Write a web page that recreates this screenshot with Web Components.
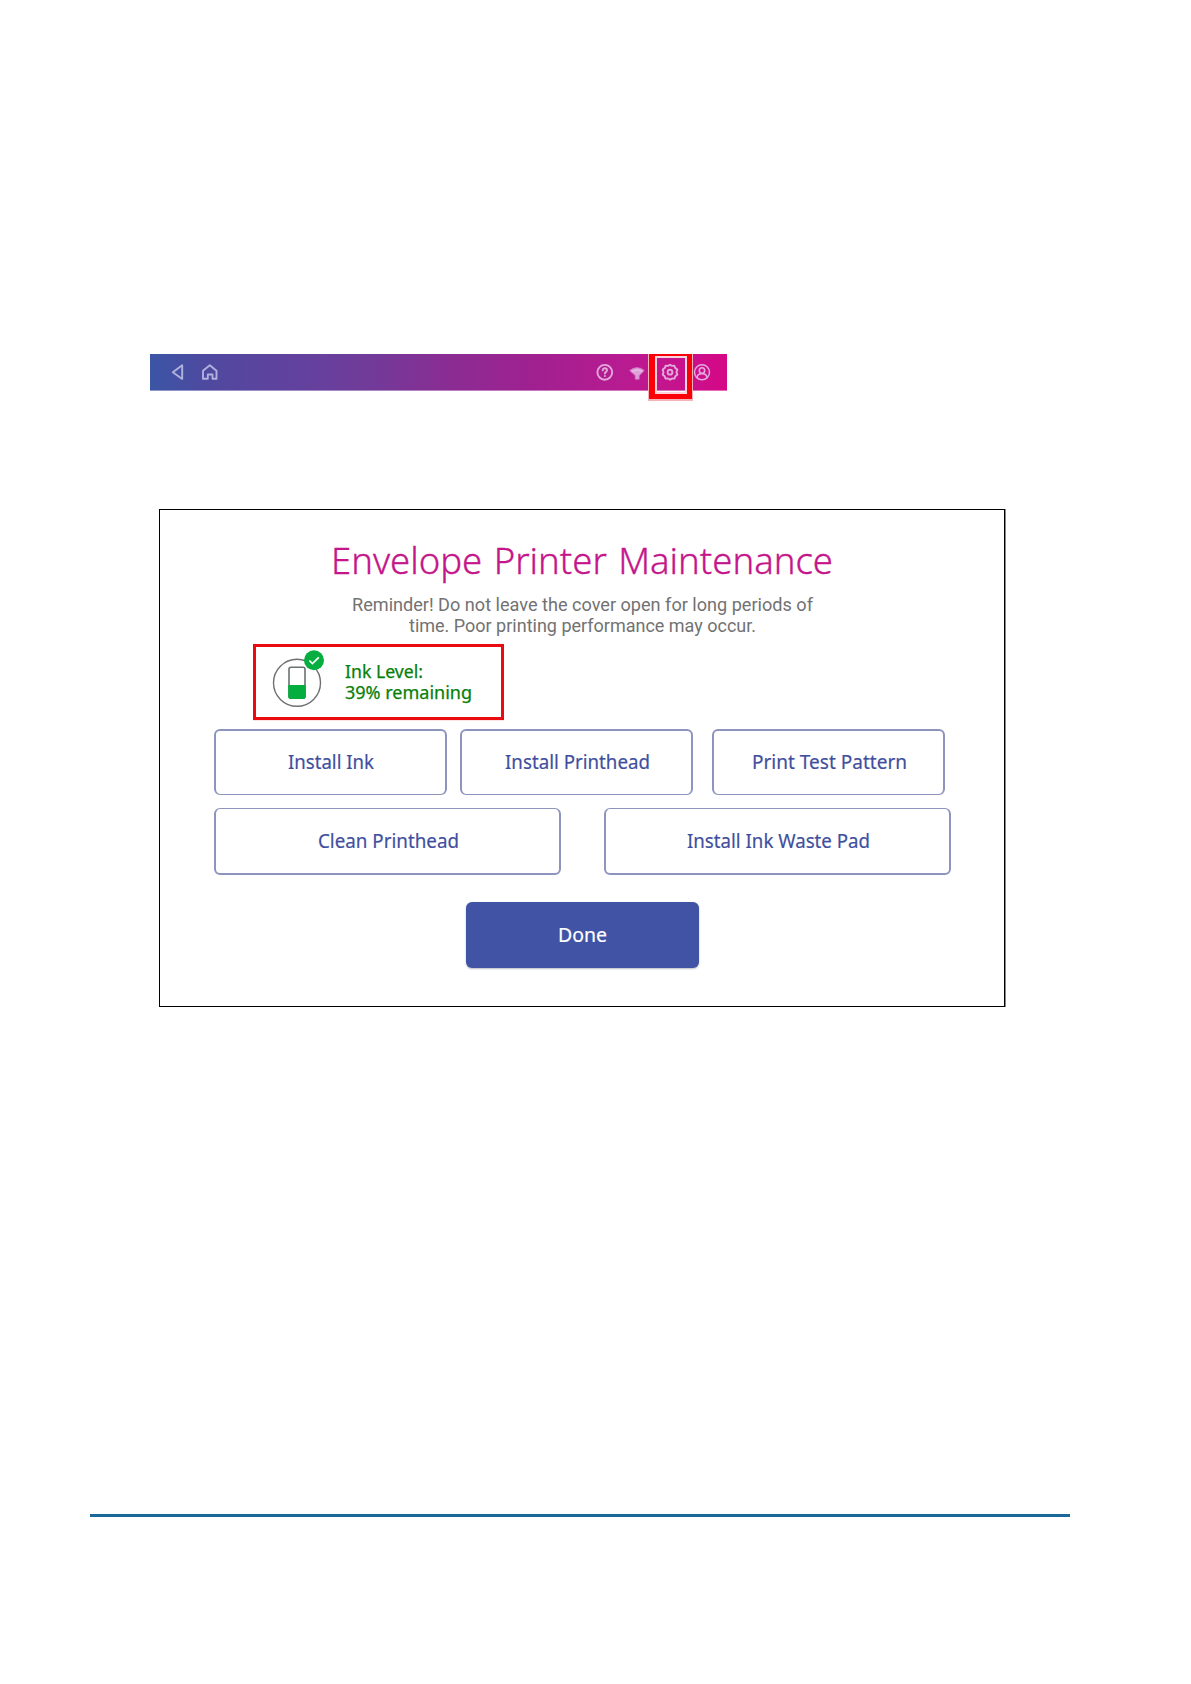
<!DOCTYPE html>
<html lang="en">
<head>
<meta charset="utf-8">
<title>Envelope Printer Maintenance</title>
<style>
  body { margin: 0; background: #fff; font-family: "Noto Sans", "Open Sans", sans-serif; }
</style>
</head>
<body>
<manual-page>
  <nav-bar slot="bar"></nav-bar>
  <maintenance-panel></maintenance-panel>
</manual-page>

<script>
// one line of text, condensed to the given width
class FitText extends HTMLElement {
  constructor() {
    super();
    this.attachShadow({ mode: 'open' });
    this.shadowRoot.innerHTML = `
      <style>
        :host { display:block; white-space:nowrap; flex:none; }
        span { display:inline-block; vertical-align:top; transform-origin:0 50%; }
      </style>
      <span><slot></slot></span>
    `;
  }
  connectedCallback() {
    const w = parseFloat(this.getAttribute('width'));
    const span = this.shadowRoot.querySelector('span');
    this.style.width = w + 'px';
    const natural = span.getBoundingClientRect().width;
    if (natural) span.style.transform = `scaleX(${w / natural})`;
  }
}

class ManualPage extends HTMLElement {
  constructor() {
    super();
    this.attachShadow({ mode: 'open' });
    this.shadowRoot.innerHTML = `
      <style>
        :host { display:flex; flex-direction:column; box-sizing:border-box; width:1191px; height:1684px; padding:354px 121px 167px 90px; overflow:hidden; }
        .bar { margin-left:60px; }
        .body { margin:118px 0 0 69px; }
        .rule { height:3px; margin-top:auto; background:#1b689b; }
      </style>
      <div class="bar"><slot name="bar"></slot></div>
      <div class="body"><slot></slot></div>
      <div class="rule"></div>
    `;
  }
}

class NavBar extends HTMLElement {
  constructor() {
    super();
    this.attachShadow({ mode: 'open' });
    this.shadowRoot.innerHTML = `
      <style>
        :host { display:flex; position:relative; box-sizing:border-box; width:577px; height:37px; padding:0 15px 0 18px; align-items:center; border-bottom:1px solid rgba(255,255,255,.4);
          background:linear-gradient(90deg,#3b55a5 0,#51489f 11%,#64419e 27%,#713b99 38%,#892d93 51%,#a12090 67%,#b81b91 82%,#ca108b 94%,#d60786 100%); background-clip:border-box; background-origin:border-box; }
        svg { display:block; flex:none; width:20px; height:20px; fill:none; stroke:#e3a9dc; stroke-width:1.9; stroke-linejoin:round; stroke-linecap:round; }
        .left, .right { display:flex; }
        .left { gap:12px; }
        .left svg { stroke:#b0b1de; }
        .right { margin-left:auto; gap:12.5px; }
        .mark { position:absolute; left:498px; top:0; box-sizing:border-box; width:45px; height:47px; border:solid #f8b4bb; border-width:0 1px 2px; }
        .mark i { display:block; box-sizing:border-box; height:45px; border:solid #fb0008; border-width:2px 5px 5px 6px; }
        .mark b { display:block; box-sizing:border-box; width:32px; height:38px; border:2px solid #fad4dc; }
      </style>
      <div class="left">
        <svg viewBox="0 0 20 20"><path d="M14.2 3.3v13.6L4.8 10.2z"/></svg>
        <svg viewBox="0 0 20 20"><path d="M3 16.8V8.7L9.8 3.2l6.7 5.5v8.1h-4v-4.3H7.8v4.3z"/></svg>
      </div>
      <div class="right">
        <svg viewBox="0 0 20 20"><circle cx="9.8" cy="10.3" r="7.4"/><path d="M7.7 8.4c0-2.9 4.3-2.7 4.3-.1 0 1.7-2.1 1.7-2.1 3.2M9.9 14v.1"/></svg>
        <svg viewBox="0 0 20 20" stroke="none"><path d="M2.8 8.3Q10 2.8 17.2 8.3L12.2 13.7v3.5H8.2v-3.5z" fill="#dfa0d8" stroke="#cf6fc4" stroke-width=".8"/><path d="M5 9.8Q10.1 6 15.2 9.8" stroke="#ecc6e8" stroke-width="1"/></svg>
        <svg viewBox="0 0 20 20"><path d="M10 2.7l2 1.2 2.4-.1.9 2.3 2 1.5-.8 2.6.8 2.6-2 1.5-.9 2.3-2.4-.1-2 1.3-2-1.3-2.4.1-.9-2.3-2-1.5.8-2.6-.8-2.6 2-1.5.9-2.3 2.4.1z"/><circle cx="10" cy="10.2" r="2.4"/></svg>
        <svg viewBox="0 0 20 20"><circle cx="10" cy="10.3" r="7.5" stroke-width="1.5"/><circle cx="10" cy="8.5" r="2.7" stroke-width="1.6"/><path d="M5.2 15.3c.2-4.8 9.4-4.8 9.6 0" stroke-width="1.6"/></svg>
      </div>
      <div class="mark"><i><b></b></i></div>
    `;
  }
}

class InkLevel extends HTMLElement {
  constructor() {
    super();
    this.attachShadow({ mode: 'open' });
    this.shadowRoot.innerHTML = `
      <style>
        :host { display:flex; box-sizing:border-box; width:251px; height:76px; padding-left:12px; align-items:center; border:3px solid #e90b10; box-shadow:0 1px #ffe3e3; color:#078007; font-size:18px; line-height:21.5px; -webkit-text-stroke:.25px; }
        svg { display:block; flex:none; width:60px; height:60px; margin-right:17px; overflow:visible; }
      </style>
      <svg viewBox="268 652 60 60" fill="none">
        <circle cx="297" cy="682.8" r="23.5" stroke="#707070" stroke-width="1.4"/>
        <rect x="289" y="667.2" width="16" height="31" rx="2" stroke="#6a7270" stroke-width="1.6"/>
        <path d="M288.2 685h17.6v11.6q0 2.4-2.4 2.4h-12.8q-2.4 0-2.4-2.4z" fill="#05ae3e"/>
        <circle cx="314" cy="660.2" r="10" fill="#05ae3e"/>
        <path d="M309.4 660.5l3 3 6.4-6.2" stroke="#fff" stroke-width="1.7"/>
      </svg>
      <div>
        <fit-text width="78">Ink Level:</fit-text>
        <fit-text width="127">39% remaining</fit-text>
      </div>
    `;
  }
}

class PanelButton extends HTMLElement {
  constructor() {
    super();
    this.attachShadow({ mode: 'open' });
    this.shadowRoot.innerHTML = `
      <style>
        :host { display:flex; box-sizing:border-box; width:233px; height:66px; padding:0 0 2px 1px; flex:none; align-items:center; justify-content:center; border:solid #8d95bf; border-width:2px 2px 1px; border-radius:6px; color:#3f4f9e; font-size:20px; line-height:28px; -webkit-text-stroke:.2px; }
        :host([wide]) { width:347px; height:67px; padding-bottom:0; border-width:1px 2px 2px; }
        :host([primary]) { padding-bottom:0; border:0; background:#4053a5; color:#fff; box-shadow:0 1px 2px rgba(50,60,90,.35); }
      </style>
      <slot></slot>
    `;
  }
}

class MaintenancePanel extends HTMLElement {
  constructor() {
    super();
    this.attachShadow({ mode: 'open' });
    this.shadowRoot.innerHTML = `
      <style>
        :host { display:flex; flex-direction:column; box-sizing:border-box; width:846px; height:498px; padding:25px 0 0; border:1px solid #000; box-shadow:1px 0 #888; }
        .title { align-self:center; height:50px; color:#c4168a; font-size:37.5px; font-weight:300; line-height:50px; word-spacing:2px; -webkit-text-stroke:.35px; }
        .note { display:flex; flex-direction:column; align-items:center; height:41px; margin-top:10px; color:#727272; font:18px/20.5px Roboto, sans-serif; }
        ink-level { margin:8px 0 0 93px; }
        .row { display:flex; margin-left:54px; }
        .three { margin-top:9px; }
        .three panel-button + panel-button { margin-left:13px; }
        .three panel-button:last-child { margin-left:19px; }
        .two { margin-top:13px; gap:43px; }
        .done { align-self:center; margin-top:27px; }
      </style>
      <fit-text class="title" width="502">Envelope Printer Maintenance</fit-text>
      <div class="note">
        <fit-text width="461">Reminder! Do not leave the cover open for long periods of</fit-text>
        <fit-text width="347">time. Poor printing performance may occur.</fit-text>
      </div>
      <ink-level></ink-level>
      <div class="row three">
        <panel-button><fit-text width="86">Install Ink</fit-text></panel-button>
        <panel-button><fit-text width="145">Install Printhead</fit-text></panel-button>
        <panel-button><fit-text width="155">Print Test Pattern</fit-text></panel-button>
      </div>
      <div class="row two">
        <panel-button wide><fit-text width="141">Clean Printhead</fit-text></panel-button>
        <panel-button wide><fit-text width="183">Install Ink Waste Pad</fit-text></panel-button>
      </div>
      <panel-button class="done" primary><fit-text width="49">Done</fit-text></panel-button>
    `;
  }
}

customElements.define('fit-text', FitText);
customElements.define('panel-button', PanelButton);
customElements.define('ink-level', InkLevel);
customElements.define('nav-bar', NavBar);
customElements.define('maintenance-panel', MaintenancePanel);
customElements.define('manual-page', ManualPage);
</script>
</body>
</html>
